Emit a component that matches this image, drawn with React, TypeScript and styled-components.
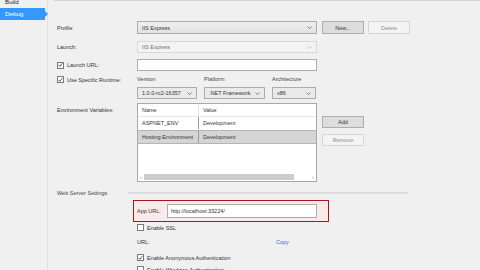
import styled, { createGlobalStyle, css } from "styled-components";

const GlobalStyle = createGlobalStyle`
    html, body {
        margin: 0;
        padding: 0;
        background: #f0f0f0;
    }
    body {
        font-family: "Liberation Sans", Arial, sans-serif;
        font-size: 5.5px;
        color: #333333;
    }
`;

const Page = styled.div`
    display: flex;
    width: 480px;
    height: 270px;
    overflow: hidden;
`;

const Sidebar = styled.nav`
    width: 47px;
    flex-shrink: 0;
    border-right: 1px solid #e2e2e2;
    display: flex;
    flex-direction: column;
`;

const NavItem = styled.div<{ $active?: boolean; $first?: boolean }>`
    position: relative;
    height: 12px;
    line-height: 12px;
    padding-left: 5px;
    font-size: 6.2px;
    color: #222;
    margin-top: ${(p) => (p.$first ? "-3px" : "0")};
    margin-right: 2px;

    ${(p) =>
        p.$first &&
        css`
            height: 11px;
            line-height: 10px;
        `}

    ${(p) =>
        p.$active &&
        css`
            background: #3399ff;
            color: #ffffff;

            &::after {
                content: "";
                position: absolute;
                right: -3px;
                top: 3px;
                border-top: 3px solid transparent;
                border-bottom: 3px solid transparent;
                border-left: 3px solid #3399ff;
            }
        `}
`;

const Main = styled.main`
    flex: 1;
    display: flex;
    flex-direction: column;
`;

const HeaderLine = styled.div`
    height: 3px;
    margin-left: 6px;
    border-bottom: 1px solid #d6d6d6;
`;

const Content = styled.div`
    padding-left: 9px;
    display: flex;
    flex-direction: column;
`;

const Row = styled.div<{ $top: number; $start?: boolean }>`
    display: grid;
    grid-template-columns: 80px 180px auto;
    align-items: ${(p) => (p.$start ? "start" : "center")};
    margin-top: ${(p) => p.$top}px;
`;

const Label = styled.span<{ $pad?: number }>`
    color: #333;
    white-space: nowrap;
    padding-top: ${(p) => p.$pad ?? 0}px;
`;

const Combo = styled.div<{ $variant?: "primary" | "disabled" | "normal"; $h?: number }>`
    height: ${(p) => p.$h ?? 12}px;
    box-sizing: border-box;
    display: flex;
    align-items: center;
    justify-content: space-between;
    padding: 0 4px;
    border: 1px solid #acacac;
    background: linear-gradient(#efefef, #e2e2e2);
    color: #333;
    white-space: nowrap;

    ${(p) =>
        p.$variant === "disabled" &&
        css`
            border-color: #d9d9d9;
            background: #f3f3f3;
            color: #6d6d6d;
        `}
    ${(p) =>
        p.$variant === "normal" &&
        css`
            background: #eaeaea;
        `}
`;

const Chevron = ({ color = "#555" }: { color?: string }) => (
    <svg width="5" height="3" viewBox="0 0 5 3">
        <polyline points="0.5,0.5 2.5,2.5 4.5,0.5" fill="none" stroke={color} strokeWidth="0.7" />
    </svg>
);

const TextBox = styled.div<{ $h?: number }>`
    height: ${(p) => p.$h ?? 12}px;
    box-sizing: border-box;
    border: 1px solid #acacac;
    background: #ffffff;
    display: flex;
    align-items: center;
    padding: 0 3px;
    color: #333;
`;

const ButtonGroup = styled.div<{ $column?: boolean; $top?: number }>`
    display: flex;
    flex-direction: ${(p) => (p.$column ? "column" : "row")};
    gap: ${(p) => (p.$column ? 6 : 4)}px;
    margin-left: 5px;
    margin-top: ${(p) => p.$top ?? 0}px;
`;

const Button = styled.div<{ $disabled?: boolean; $h?: number }>`
    width: 42px;
    height: ${(p) => p.$h ?? 12}px;
    box-sizing: border-box;
    display: flex;
    align-items: center;
    justify-content: center;
    border: 1px solid #adadad;
    background: #dddddd;
    color: #333;

    ${(p) =>
        p.$disabled &&
        css`
            border-color: #d5d5d5;
            background: #f4f4f4;
            color: #8a8a8a;
        `}
`;

const CheckRow = styled.label<{ $top?: number }>`
    display: flex;
    align-items: center;
    gap: 3px;
    margin-top: ${(p) => p.$top ?? 0}px;
    white-space: nowrap;
    color: #333;
`;

const Box = styled.span`
    width: 7px;
    height: 7px;
    box-sizing: border-box;
    border: 1px solid #7a7a7a;
    background: #ffffff;
    display: flex;
    align-items: center;
    justify-content: center;
    flex-shrink: 0;
`;

const CheckBox = ({ checked }: { checked?: boolean }) => (
    <Box>
        {checked && (
            <svg width="6" height="6" viewBox="0 0 6 6">
                <polyline points="0.8,3 2.3,4.6 5.3,0.8" fill="none" stroke="#222" strokeWidth="0.9" />
            </svg>
        )}
    </Box>
);

const RuntimeGrid = styled.div`
    display: grid;
    grid-template-columns: 60px 61px 44px;
    column-gap: 7px;
    row-gap: 4px;
    align-items: center;
`;

const SubLabel = styled.span`
    height: 8px;
    line-height: 8px;
    color: #444;
`;

const Table = styled.div`
    height: 79px;
    box-sizing: border-box;
    border: 1px solid #a9a9a9;
    background: #ffffff;
    display: flex;
    flex-direction: column;
`;

const TableRow = styled.div<{ $header?: boolean; $selected?: boolean }>`
    display: grid;
    grid-template-columns: 61px 1fr;
    height: 12px;
    line-height: 12px;
    border-bottom: 1px solid ${(p) => (p.$header ? "#e5e5e5" : "transparent")};

    ${(p) =>
        p.$selected &&
        css`
            background: #d5d5d5;
            border-top: 1px solid #b5b5b5;
            border-bottom: 1px solid #b5b5b5;
        `}
`;

const Cell = styled.span<{ $header?: boolean }>`
    padding-left: 4px;
    white-space: nowrap;
    overflow: hidden;
    color: #333;
    border-right: 1px solid ${(p) => (p.$header ? "#e5e5e5" : "#9a9a9a")};

    &:last-child {
        border-right: none;
    }
`;

const Spacer = styled.div`
    flex: 1;
`;

const ScrollBar = styled.div`
    height: 7px;
    margin-bottom: 1px;
    display: flex;
    align-items: center;
    padding: 0 2px;
    gap: 2px;
    color: #777;
    font-size: 5px;
`;

const Thumb = styled.div`
    flex: 1;
    height: 6px;
    background: #cdcdcd;
    margin-right: 16px;
`;

const SectionRow = styled.div<{ $top: number }>`
    display: flex;
    align-items: center;
    margin-top: ${(p) => p.$top}px;
    height: 8px;
`;

const SectionLabel = styled.span`
    width: 71px;
    color: #444;
    white-space: nowrap;
`;

const SectionLine = styled.div`
    width: 280px;
    height: 2px;
    background: #dcdcdc;
`;

const Settings = styled.div`
    margin-left: 80px;
    display: flex;
    flex-direction: column;
    width: 196px;
`;

const Highlight = styled.div`
    margin-top: 3px;
    margin-left: -4px;
    width: 196px;
    box-sizing: border-box;
    padding: 3px;
    border: 1px solid #a8161e;
    background: #fbeaea;
    display: grid;
    grid-template-columns: 30px 150px;
    align-items: center;
`;

const UrlRow = styled.div`
    display: grid;
    grid-template-columns: 139px auto;
    margin-top: 7px;
    height: 8px;
    align-items: center;
`;

const Link = styled.a`
    color: #3a6fc9;
    text-decoration: none;
`;

export default function App() {
    return (
        <>
            <GlobalStyle />
            <Page>
                <Sidebar>
                    <NavItem $first>Build</NavItem>
                    <NavItem $active>Debug</NavItem>
                </Sidebar>
                <Main>
                    <HeaderLine />
                    <Content>
                        <Row $top={20}>
                            <Label>Profile</Label>
                            <Combo $h={13}>
                                IIS Express
                                <Chevron />
                            </Combo>
                            <ButtonGroup>
                                <Button $h={13}>New...</Button>
                                <Button $h={13} $disabled>
                                    Delete
                                </Button>
                            </ButtonGroup>
                        </Row>

                        <Row $top={7}>
                            <Label>Launch:</Label>
                            <Combo $variant="disabled">
                                IIS Express
                                <Chevron color="#aaa" />
                            </Combo>
                        </Row>

                        <Row $top={6}>
                            <CheckRow>
                                <CheckBox checked />
                                Launch URL:
                            </CheckRow>
                            <TextBox />
                        </Row>

                        <Row $top={4} $start>
                            <CheckRow $top={1}>
                                <CheckBox checked />
                                Use Specific Runtime:
                            </CheckRow>
                            <RuntimeGrid>
                                <SubLabel>Version</SubLabel>
                                <SubLabel>Platform</SubLabel>
                                <SubLabel>Architecture</SubLabel>
                                <Combo $variant="normal">
                                    1.0.0-rc2-16357
                                    <Chevron />
                                </Combo>
                                <Combo $variant="normal">
                                    .NET Framework
                                    <Chevron />
                                </Combo>
                                <Combo $variant="normal">
                                    x86
                                    <Chevron />
                                </Combo>
                            </RuntimeGrid>
                        </Row>

                        <Row $top={4} $start>
                            <Label $pad={4}>Environment Variables:</Label>
                            <Table>
                                <TableRow $header>
                                    <Cell $header>Name</Cell>
                                    <Cell $header>Value</Cell>
                                </TableRow>
                                <TableRow>
                                    <Cell>ASPNET_ENV</Cell>
                                    <Cell>Development</Cell>
                                </TableRow>
                                <TableRow $selected>
                                    <Cell>Hosting:Environment</Cell>
                                    <Cell>Development</Cell>
                                </TableRow>
                                <Spacer />
                                <ScrollBar>
                                    <span>‹</span>
                                    <Thumb />
                                    <span>›</span>
                                </ScrollBar>
                            </Table>
                            <ButtonGroup $column $top={13}>
                                <Button>Add</Button>
                                <Button $disabled>Remove</Button>
                            </ButtonGroup>
                        </Row>

                        <SectionRow $top={7}>
                            <SectionLabel>Web Server Settings</SectionLabel>
                            <SectionLine />
                        </SectionRow>

                        <Settings>
                            <Highlight>
                                <Label>App URL:</Label>
                                <TextBox $h={14}>http://localhost:33224/</TextBox>
                            </Highlight>
                            <CheckRow $top={2}>
                                <CheckBox />
                                Enable SSL
                            </CheckRow>
                            <UrlRow>
                                <Label>URL:</Label>
                                <Link href="#">Copy</Link>
                            </UrlRow>
                            <CheckRow $top={8}>
                                <CheckBox checked />
                                Enable Anonymous Authentication
                            </CheckRow>
                            <CheckRow $top={5}>
                                <CheckBox />
                                Enable Windows Authentication
                            </CheckRow>
                        </Settings>
                    </Content>
                </Main>
            </Page>
        </>
    );
}
